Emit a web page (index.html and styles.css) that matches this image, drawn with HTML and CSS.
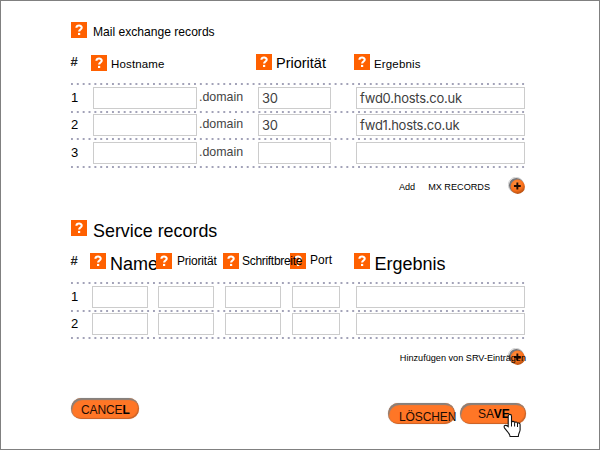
FILE: index.html
```html
<!DOCTYPE html>
<html lang="de">
<head>
<meta charset="utf-8">
<title>DNS</title>
<link rel="stylesheet" href="styles.css">
</head>
<body>
<svg width="0" height="0" class="defs">
  <defs>
    <radialGradient id="ball" cx="40%" cy="30%" r="75%">
      <stop offset="0" stop-color="#ff9040"/><stop offset=".6" stop-color="#fb701a"/><stop offset="1" stop-color="#a84a10"/>
    </radialGradient>
    <symbol id="help" viewBox="0 0 16 16">
      <rect width="16" height="16" fill="#ff6000"/>
      <path d="M5.4 5.8C5.6 2.9 10.7 2.8 10.7 5.7C10.7 7.5 8.2 7.5 8.1 9.5" fill="none" stroke="#fff" stroke-width="2.1"/>
      <rect x="7" y="10.9" width="2.2" height="2.1" fill="#fff"/>
    </symbol>
    <symbol id="plus" viewBox="0 0 20 20">
      <circle cx="9.3" cy="9.3" r="8.3" fill="#77777a"/>
      <circle cx="8.8" cy="8.8" r="8.5" fill="none" stroke="#bbb" stroke-width=".7"/>
      <circle cx="10.8" cy="10.8" r="8" fill="url(#ball)"/>
      <path d="M10.4 6.2v7.6M6.6 10h7.6" stroke="#200d04" stroke-width="2.1"/>
    </symbol>
  </defs>
</svg>
<main class="page">
  <section class="mx">
    <h2 class="title title-small"><svg class="help"><use href="#help"/></svg><span>Mail exchange records</span></h2>
    <div class="head mx-cols">
      <b class="hash">#</b>
      <div class="col"><svg class="help low"><use href="#help"/></svg><span class="hostname">Hostname</span></div>
      <div class="col"><svg class="help"><use href="#help"/></svg><span class="prio-large">Priorität</span></div>
      <div class="col"><svg class="help"><use href="#help"/></svg><span class="result-small">Ergebnis</span></div>
    </div>
    <div class="rows">
      <div class="row mx-cols"><span class="num">1</span><div class="host"><i class="field"></i><span>.domain</span></div><i class="field prio">30</i><i class="field wide">fwd0.hosts.co.uk</i></div>
      <div class="row mx-cols"><span class="num">2</span><div class="host"><i class="field"></i><span>.domain</span></div><i class="field prio">30</i><i class="field wide">fwd1.hosts.co.uk</i></div>
      <div class="row mx-cols"><span class="num">3</span><div class="host"><i class="field"></i><span>.domain</span></div><i class="field prio"></i><i class="field wide"></i></div>
      <div class="rule"></div>
    </div>
    <div class="add"><span class="add-word">Add</span><span>MX RECORDS</span><svg class="plus"><use href="#plus"/></svg></div>
  </section>
  <section class="srv">
    <h2 class="title title-large"><svg class="help"><use href="#help"/></svg><span>Service records</span></h2>
    <div class="head srv-cols">
      <b class="hash">#</b>
      <div class="col"><svg class="help"><use href="#help"/></svg><span class="large">Name</span></div>
      <div class="col"><svg class="help"><use href="#help"/></svg><span class="prio-small">Priorität</span></div>
      <div class="col over"><svg class="help"><use href="#help"/></svg><span class="weight">Schriftbreite</span></div>
      <div class="col"><svg class="help"><use href="#help"/></svg><span class="port">Port</span></div>
      <div class="col"><svg class="help"><use href="#help"/></svg><span class="large">Ergebnis</span></div>
    </div>
    <div class="rows">
      <div class="row srv-cols"><span class="num">1</span><i class="field"></i><i class="field"></i><i class="field"></i><i class="field portfield"></i><i class="field wide"></i></div>
      <div class="row srv-cols"><span class="num">2</span><i class="field"></i><i class="field"></i><i class="field"></i><i class="field portfield"></i><i class="field wide"></i></div>
      <div class="rule"></div>
    </div>
    <div class="add"><span class="add-long">Hinzufügen von SRV-Einträgen</span><svg class="plus"><use href="#plus"/></svg></div>
  </section>
  <footer class="actions">
    <button class="btn cancel">CANCE<b>L</b></button>
    <button class="btn delete">LÖSCHEN</button>
    <button class="btn save">SA<b>VE</b></button>
  </footer>
  <svg class="cursor" viewBox="0 0 19 25"><path d="M5.2 13.5V3.2c0-2.5 3.3-2.5 3.3 0v6.1c.4-1.5 3-1.2 3.1.5c.5-1.3 2.8-1 2.9.7c.6-1 2.6-.6 2.6 1.3v5c0 2.4-1.8 3.4-1.8 6.7H7.1c0-2.7-2.4-4.4-5.5-8.4c-1.6-2.3 1-3.8 3.6-1.6z" fill="#fff" stroke="#111" stroke-width="1.1"/><path d="M8.5 9v4.5M11.6 10v3.5M14.5 11v3" stroke="#111" fill="none"/></svg>
</main>
</body>
</html>
```
FILE: styles.css
```css
* { box-sizing: border-box; }
body { margin: 0; background: #fff; color: #000; font-family: "Liberation Sans", Arial, sans-serif; }
.defs { position: absolute; }
.page { position: relative; width: 600px; height: 450px; border: 1px solid #808080; padding: 21px 73px 0 70px; overflow: hidden; }
.mx { height: 198px; }
.srv { height: 178px; }
.title { display: flex; gap: 6px; margin: 0; height: 32px; font-weight: 400; line-height: 16px; white-space: nowrap; }
.title-small { font-size: 12.1px; }
.title-small span { padding-top: 2px; }
.title-large { font-size: 17.9px; height: 33px; }
.title-large span { padding-top: 3px; }
.help { display: block; width: 16px; height: 16px; flex: none; }
.low { margin-top: 1px; }
.mx-cols { display: grid; grid-template-columns: 22px 165px 98px 170px; }
.srv-cols { display: grid; grid-template-columns: 20.5px 66.5px 67px 67px 64px 170px; }
.head { height: 29px; line-height: 16px; }
.hash { font-size: 13px; color: #222; margin-left: -.5px; }
.col { display: flex; gap: 4px; align-items: flex-start; white-space: nowrap; min-width: 0; margin-left: -2px; }
.over { position: relative; z-index: 1; }
.hostname { font-size: 11.5px; letter-spacing: .15px; margin-top: 2px; }
.prio-large { font-size: 14.5px; margin-top: 1px; }
.result-small { font-size: 11.5px; letter-spacing: .15px; margin-top: 2px; }
.large { font-size: 18px; margin-top: 3px; padding-left: .5px; }
.prio-small { font-size: 12px; letter-spacing: -.2px; padding-left: 1px; }
.weight { font-size: 12px; letter-spacing: -.3px; margin-left: -1px; }
.port { font-size: 12px; margin-top: -1px; }
.row, .rule { background: radial-gradient(circle at 50% 50%, #9090aa .6px, transparent 1.2px) -2px 0 / 5.87px 2px repeat-x; }
.row { height: 27.6px; padding-top: 3.5px; align-items: start; }
.rule { height: 2px; }
.num { font-size: 13px; line-height: 21px; color: #000; }
.host { display: flex; gap: 2px; font-size: 12.4px; line-height: 20px; color: #444; }
.host .field { width: 104px; }
.field { display: block; width: 56px; height: 22px; border: 1px solid #ccc; background: #fff; font: 400 13px/21px Inter, sans-serif; letter-spacing: -.25px; color: #404040; padding-left: 3px; }
.prio { width: 73px; }
.wide { width: 169px; }
.portfield { width: 48px; }
.add { display: flex; justify-content: flex-end; height: 20px; margin-top: 9px; font-size: 9.15px; line-height: 20px; white-space: nowrap; }
.add-word { margin-right: 13px; }
.add-long { margin-right: -18px; z-index: 1; line-height: 21px; }
.plus { display: block; width: 18px; height: 18px; flex: none; margin-left: 18px; }
.add-long + .plus { margin-left: 0; }
.actions { display: flex; align-items: flex-start; }
.btn { height: 21px; padding: 0; border: 0; border-radius: 11px; color: #1b0c04; font: 12px/21px "Liberation Sans", Arial, sans-serif; letter-spacing: -.1px; background: #ff7626; box-shadow: inset 1px 2px 1px #85817e, inset -1px -1px 1px #c86329, 0 0 1px #aaa; white-space: nowrap; text-align: left; }
.cancel { width: 68px; padding: 2px 0 0 10px; }
.btn b { color: #000; }
.delete { width: 67px; margin: 5px 5px 0 249px; padding: 4px 0 0 11px; }
.save { width: 66px; margin-top: 5px; padding: 1px 0 0 18px; }
.cursor { position: absolute; left: 502px; top: 412px; width: 19px; height: 25px; }
```
